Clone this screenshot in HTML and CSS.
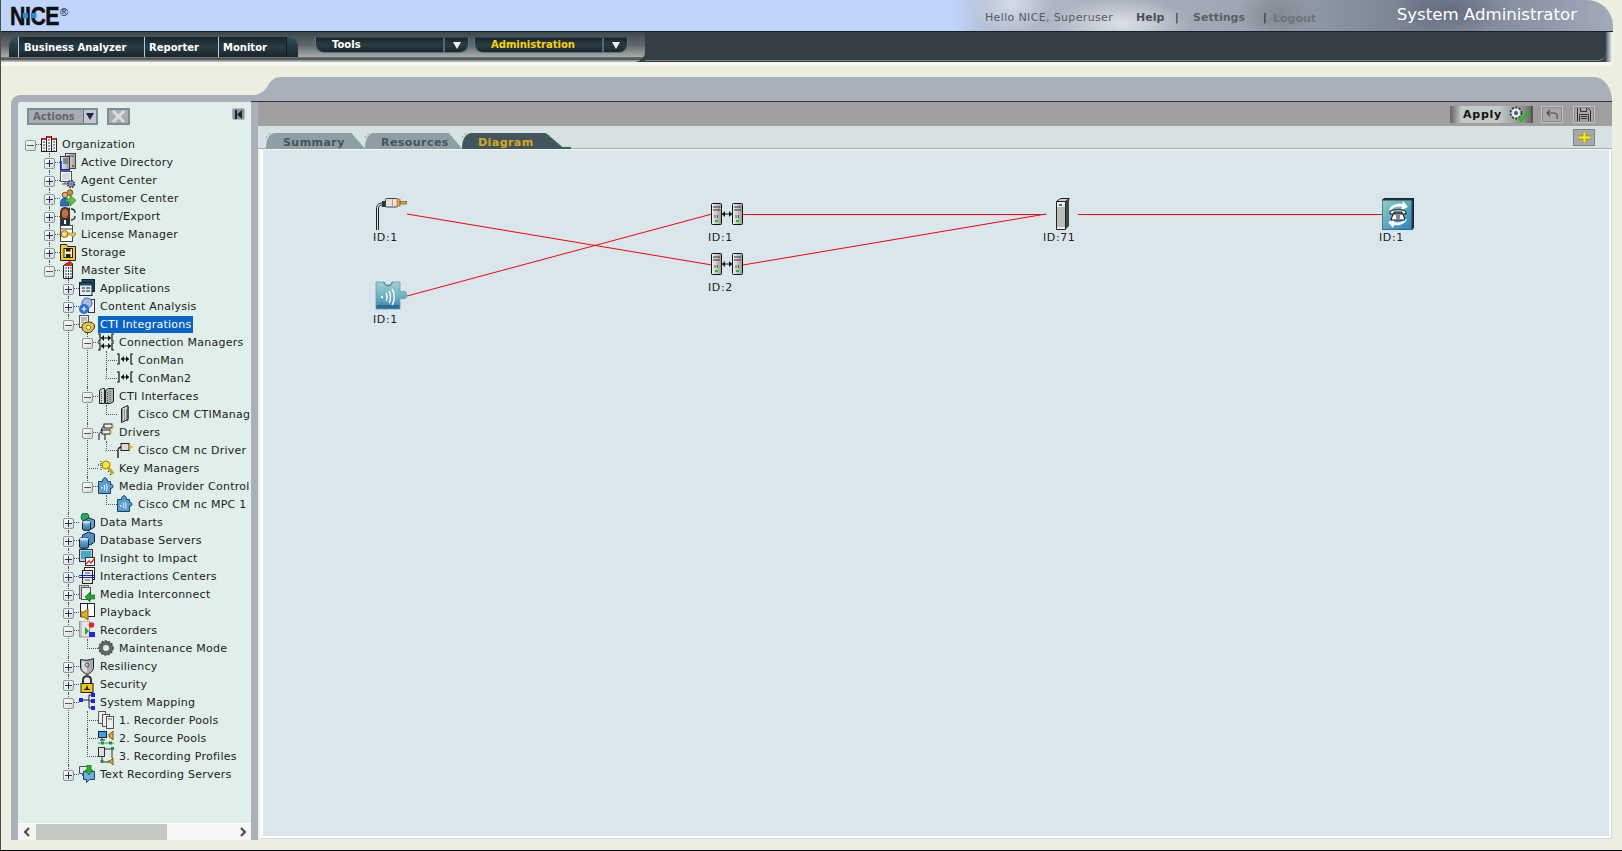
FILE: index.html
```html
<!DOCTYPE html>
<html lang="en">
<head>
<meta charset="utf-8">
<title>System Administrator</title>
<link rel="stylesheet" href="styles.css">
</head>
<body>
<svg class="defs" aria-hidden="true">
  <defs>
    <linearGradient id="metal" x1="0" x2="1" y1="0" y2="0"><stop offset="0" stop-color="#f4f4f4"/><stop offset="1" stop-color="#9a9a9a"/></linearGradient>
    <linearGradient id="blue" x1="0" x2="0" y1="0" y2="1"><stop offset="0" stop-color="#8ec5e8"/><stop offset="1" stop-color="#2f6ca8"/></linearGradient>
    <linearGradient id="puz" x1="0" x2="0" y1="0" y2="1"><stop offset="0" stop-color="#9ed4cc"/><stop offset=".55" stop-color="#6cb0bf"/><stop offset=".85" stop-color="#4a8fb5"/><stop offset=".86" stop-color="#2c6a98"/><stop offset="1" stop-color="#2c6a98"/></linearGradient>
    <linearGradient id="tile" x1="0" x2="1" y1="0" y2="1"><stop offset="0" stop-color="#8fd0c0"/><stop offset="1" stop-color="#2f7fc0"/></linearGradient>
    <symbol id="i-org" viewBox="0 0 16 18"><g stroke="#222" fill="#f4f4f4"><rect x=".5" y="3.500" width="5" height="13"/><rect x="5.500" y="1.500" width="5" height="15"/><rect x="10.500" y="3.500" width="5" height="13"/></g><path fill="#d22" d="M1 3h4v2H1zM6 1h4v2H6zM11 3h4v2h-4z"/><path stroke="#345" stroke-dasharray="2 1" d="M3 6v10M8 4v12M13 6v10"/></symbol>
    <symbol id="i-ad" viewBox="0 0 16 18"><rect x="5.500" y=".5" width="10" height="15" fill="url(#metal)" stroke="#444"/><rect x=".5" y="3.500" width="9" height="13" fill="url(#metal)" stroke="#336"/><path stroke="#12c" stroke-width="1.500" fill="none" d="M1 8v9h9"/><path stroke="#444" d="M3 6h5M3 8h5M3 10h5M7 3h7"/><rect x="12" y="12" width="2" height="2" fill="#c33"/></symbol>
    <symbol id="i-agent" viewBox="0 0 16 18"><rect x=".5" y=".5" width="11" height="10" fill="#fff" stroke="#555"/><rect x="2" y="2" width="8" height="7" fill="#d4dde4"/><path stroke="#555" d="M5 11v2M2 13h6"/><circle cx="11" cy="13" r="3.200" fill="#aab" stroke="#334" stroke-width="2" stroke-dasharray="1.500 1"/><circle cx="11" cy="13" r="1.500" fill="#66e"/></symbol>
    <symbol id="i-customer" viewBox="0 0 16 18"><circle cx="5" cy="6" r="2.800" fill="#e8b070" stroke="#753"/><circle cx="10" cy="3.500" r="2.800" fill="#d09040" stroke="#753"/><path fill="#2a70c8" stroke="#124" stroke-width=".5" d="M0 17c0-6 2-8 5-8s4 2 4 8z"/><path fill="#6ac03a" stroke="#1a6a1a" stroke-width=".6" d="M6 10h4V6l6 5.500-6 5.500v-4H6z"/></symbol>
    <symbol id="i-import" viewBox="0 0 16 18"><path fill="#5a2e1a" d="M0 18V6c0-4 2-6 5-6s5 2 5 6v12z"/><ellipse cx="5" cy="6.500" rx="3.200" ry="4.500" fill="#b87448"/><path fill="#123a4a" d="M0 18c0-4 2-6 5-6s5 2 5 6z"/><path fill="#fff" d="M4 13h2v4H4z"/><path fill="none" stroke="#222" stroke-width="1.300" d="M11 2c3 0 4 2 4 4M15 9c0 3-2 4-4 4"/><path fill="#222" d="M10 0v4l-2-2zM10 11v4l-2-2z"/></symbol>
    <symbol id="i-license" viewBox="0 0 16 18"><rect x=".5" y=".5" width="12" height="16" fill="#fff" stroke="#444"/><path stroke="#444" d="M1 4h11"/><circle cx="4.500" cy="9" r="3.500" fill="#f8cf3a" stroke="#864"/><circle cx="4" cy="9" r="1" fill="#fff"/><path fill="#f8cf3a" stroke="#864" stroke-width=".6" d="M8 8h8v2h-2v2h-2v-2H8z"/></symbol>
    <symbol id="i-storage" viewBox="0 0 16 18"><path fill="#f7cb2e" stroke="#222" d="M.5 17.500V1.500h6l1 2h8v14z"/><rect x="4" y="5.500" width="8.500" height="9" fill="#fff2b0" stroke="#222"/><rect x="6" y="5.500" width="4.500" height="3" fill="#222"/><rect x="6" y="11" width="4.500" height="3.500" fill="#222"/></symbol>
    <symbol id="i-site" viewBox="0 0 16 18"><path fill="#f4f4f4" stroke="#222" d="M3.500 17.500V4.500l6-4 3 2v15z"/><path fill="#d22" d="M4 4l5.500-3.500 2.500 2V5H4z"/><path stroke="#345" stroke-dasharray="2 1" d="M6 6v11M8.500 6v11M11 6v11"/></symbol>
    <symbol id="i-apps" viewBox="0 0 16 18"><rect x="3" y=".5" width="12.500" height="12" fill="#1e4a60" stroke="#123"/><rect x=".5" y="3.500" width="12.500" height="13" fill="#e6eae8" stroke="#123"/><rect x="1" y="4" width="12" height="2.500" fill="#1e4a60"/><path stroke="#567" stroke-width="1.500" d="M3 9h3M7 9h4M3 12h3M7 12h4"/></symbol>
    <symbol id="i-content" viewBox="0 0 16 18"><rect x="9.500" y="2.500" width="6" height="13" fill="#eef" stroke="#333"/><circle cx="8" cy="6" r="5" fill="#a8b8e8" stroke="#468"/><circle cx="5" cy="12" r="5" fill="#2a70d8"/><path stroke="#fff" stroke-width="1.200" d="M2.500 12h5M5 9.500v5"/></symbol>
    <symbol id="i-cti" viewBox="0 0 16 18"><rect x=".5" y=".5" width="9" height="12" fill="#f2f2f2" stroke="#555"/><path stroke="#888" d="M2 3h6M2 5h6M2 7h3"/><path fill="#e8c84a" stroke="#3a2a08" d="M3 12c0-3 3-5 6.500-5S16 9 15.500 12c-1 3-3 5-5 5.500H7c-2-.5-4-3-4-5.500z"/><circle cx="9.500" cy="12.500" r="2.200" fill="#fff3b0" stroke="#3a2a08" stroke-dasharray="1 .6"/></symbol>
    <symbol id="i-conn2" viewBox="0 0 16 18"><path fill="none" stroke="#111" stroke-width="1.200" d="M0 1h2v7H0M0 10h2v7H0M16 1h-2v7h2M16 10h-2v7h2M3 5h10M3 13h10"/><path fill="#111" d="M3 5l3-3v6zM13 5l-3-3v6zM3 13l3-3v6zM13 13l-3-3v6z"/></symbol>
    <symbol id="i-conn" viewBox="0 0 16 18"><path fill="none" stroke="#111" stroke-width="1.200" d="M0 3h2v10H0M16 3h-2v10h2M4 8h8"/><path fill="#111" d="M4 8l3-3v6zM12 8l-3-3v6z"/></symbol>
    <symbol id="i-ctiif" viewBox="0 0 16 18"><path fill="#cfd4cf" stroke="#222" d="M1.500 3.500l3-2h2v15h-5z"/><path fill="#aab3a8" stroke="#222" d="M7.500 3.500l3-2h5v13l-3 2h-5z"/><path stroke="#356" stroke-dasharray="1 1" d="M3.500 5v11M9.500 5v11M12 4v11"/></symbol>
    <symbol id="i-srv" viewBox="0 0 16 18"><path fill="#ddd" stroke="#222" d="M4.500 3.500l6-3v14l-6 3z"/><path stroke="#333" stroke-dasharray="1 1" d="M5 5h5M5 7h5M5 9h5M5 11h5M5 13h5M5 15h5"/><path fill="#555" d="M10 1h2v13l-2 3z"/></symbol>
    <symbol id="i-drivers" viewBox="0 0 16 18"><path fill="none" stroke="#111" d="M1 17v-5c0-2 1-3 3-3M7 17v-5c0-1 0-2 2-3"/><rect x="6" y="1" width="8" height="4" fill="#eee" stroke="#222"/><rect x="13" y="2" width="3" height="2" fill="#e8b020"/><rect x="4" y="7" width="8" height="4" fill="#eee" stroke="#222"/><rect x="11" y="8" width="3" height="2" fill="#e8b020"/><path fill="none" stroke="#111" d="M3 8c1-3 2-5 3-5"/></symbol>
    <symbol id="i-driver" viewBox="0 0 16 18"><path fill="none" stroke="#222" stroke-width="1.400" d="M1 17v-7c0-3 2-4 4-4"/><rect x="4" y="2.500" width="8" height="7" fill="#ddd" stroke="#222"/><rect x="12" y="4" width="2" height="4" fill="#e8a030"/><rect x="13" y="5" width="3" height="2" fill="#e8c020"/></symbol>
    <symbol id="i-keym" viewBox="0 0 16 18"><path stroke="#888" stroke-width="2" stroke-dasharray="1 1" d="M0 6h5M3 2v10"/><circle cx="8" cy="6" r="4" fill="#f8e820" stroke="#a08010"/><path stroke="#c0a010" stroke-width="3" d="M10 8l5 7"/><path stroke="#222" d="M11 12l-1 1M13 15l-1 1"/></symbol>
    <symbol id="i-mpc" viewBox="0 0 16 18"><path fill="#5b9cd0" stroke="#1c4468" d="M.5 4.500h4c0-5 5-5 5 0h3v3c3-1.500 3.500 5 0 3.500v5.500H.5z"/><path fill="none" stroke="#fff" d="M6 8c1 1 1 4 0 5M8 7c1.500 2 1.500 5 0 7"/><rect x="3" y="10" width="1.500" height="1.500" fill="#fff"/></symbol>
    <symbol id="i-marts" viewBox="0 0 16 18"><circle cx="6" cy="4" r="4" fill="#3aa84a" stroke="#1c6a70"/><path fill="#60a8d8" stroke="#123" d="M4.500 8l5-3 6 2v7l-5 3-6-2z"/><path fill="url(#blue)" stroke="#123" d="M3.500 9c0-2 8-2 8 0v7c0 2-8 2-8 0z"/><ellipse cx="7.500" cy="9" rx="4" ry="1.500" fill="#bde"/></symbol>
    <symbol id="i-db" viewBox="0 0 16 18"><path fill="#4d90c8" stroke="#123" d="M3.500 4l6-3 6 2v8l-4 3-8-3z"/><path fill="url(#blue)" stroke="#123" d="M.5 8c0-2 9-2 9 0v8c0 2-9 2-9 0z"/><ellipse cx="5" cy="8" rx="4.500" ry="1.500" fill="#cde"/></symbol>
    <symbol id="i-insight" viewBox="0 0 16 18"><rect x=".5" y=".5" width="13" height="12" fill="#ccc" stroke="#333"/><rect x="2" y="2" width="10" height="8" fill="#4ac"/><rect x="6.500" y="8.500" width="9" height="8" fill="#fff" stroke="#333"/><path fill="none" stroke="#d22" stroke-width="1.300" d="M7 15l3-3 2 2 3-4"/></symbol>
    <symbol id="i-inter" viewBox="0 0 16 18"><rect x="5.500" y=".5" width="10" height="12" fill="#fff" stroke="#222"/><rect x="3.500" y="3.500" width="10" height="13" fill="#e8e8e8" stroke="#222"/><path stroke="#555" d="M6 6h5M6 13h5"/><path fill="none" stroke="#12c" stroke-width="1.200" d="M0 8.500h16M0 10.500h16"/></symbol>
    <symbol id="i-media" viewBox="0 0 16 18"><rect x=".5" y=".5" width="9" height="13" fill="#ccc" stroke="#666"/><rect x="2.500" y="2.500" width="9" height="12" fill="#eee" stroke="#555"/><path fill="#2a2" stroke="#063" stroke-width=".6" d="M6 12l5-5v3h5v4h-5v3z"/></symbol>
    <symbol id="i-playback" viewBox="0 0 16 18"><rect x="1.500" y=".5" width="7" height="13" fill="#fff" stroke="#222"/><rect x="8.500" y=".5" width="7" height="13" fill="#fff" stroke="#222"/><path fill="#e0b020" stroke="#7a5a10" d="M2 9h3l4-3v11l-4-3H2z"/></symbol>
    <symbol id="i-rec" viewBox="0 0 16 18"><rect x=".5" y="0" width="10" height="16" fill="#e8e8e8" stroke="#999"/><path stroke="#999" d="M2 0v16"/><path fill="#2a2" d="M6 6l4 4-4 4z"/><circle cx="12.500" cy="4" r="2.800" fill="#e22"/><rect x="10" y="11" width="6" height="5" fill="#22e"/></symbol>
    <symbol id="i-gear" viewBox="0 0 16 18"><circle cx="8" cy="9" r="5" fill="none" stroke="#666" stroke-width="4"/><circle cx="8" cy="9" r="7" fill="none" stroke="#444" stroke-width="1.500" stroke-dasharray="2 1.500"/></symbol>
    <symbol id="i-shield" viewBox="0 0 16 18"><path fill="#aab" stroke="#222" d="M1.500 2.500c4 1 9 1 13-1v9c0 3-3 6-6.500 7C5 16 1.500 14 1.500 10z"/><path fill="#ddd" d="M3 4c3 1 5 1 5 1v11c-3-1-5-3-5-6z"/><circle cx="8" cy="8" r="2" fill="none" stroke="#555"/></symbol>
    <symbol id="i-lock" viewBox="0 0 16 18"><path fill="none" stroke="#333" stroke-width="2" d="M4 9V5c0-5 8-5 8 0v4"/><rect x="2" y="8.500" width="12" height="9" fill="#f2c80e" stroke="#222"/><path fill="#222" d="M8 10l1.500 4H11v1H5v-1h1.500z"/></symbol>
    <symbol id="i-map" viewBox="0 0 16 18"><path fill="none" stroke="#224" d="M4 7h6M10 2v13M10 2h2M10 8h2M10 15h2"/><g fill="#22e"><rect y="5" width="4" height="4"/><rect x="12" y="0" width="4" height="4"/><rect x="12" y="6" width="4" height="4"/><rect x="12" y="13" width="4" height="4"/></g></symbol>
    <symbol id="i-rp" viewBox="0 0 16 18"><g fill="#eee" stroke="#555"><rect x=".5" y=".5" width="7" height="12"/><rect x="4.500" y="3.500" width="7" height="12"/><rect x="8.500" y="5.500" width="7" height="12"/></g><path stroke="#777" d="M10 8h4"/></symbol>
    <symbol id="i-sp" viewBox="0 0 16 18"><rect x=".5" y="2.500" width="8" height="6" fill="#3aa0e8" stroke="#123"/><path stroke="#123" d="M4 9v2M2 11h5"/><path fill="#e0b020" stroke="#7a5a10" d="M11 5h1l3-3v9l-3-3h-1z"/><path stroke="#1a7" d="M0 14h16"/><rect x="3" y="12.500" width="3" height="3" fill="#2a8a3a"/><rect x="11" y="12.500" width="3" height="3" fill="#2a8a3a"/></symbol>
    <symbol id="i-prof" viewBox="0 0 16 18"><rect x=".5" y=".5" width="6" height="9" fill="#ddd" stroke="#333"/><path stroke="#333" d="M7 2h7M14 2v9M4 10v5M4 15h7"/><rect x="13" y="0" width="3" height="3" fill="#2a8a3a"/><rect x="2.500" y="13" width="3" height="3" fill="#2a8a3a"/><path fill="#e0b020" stroke="#7a5a10" d="M10 14h2l3-3v7l-3-3h-2z"/></symbol>
    <symbol id="i-text" viewBox="0 0 16 18"><path fill="#dfe8f0" stroke="#456" d="M.5 1.500h9v7h-4l-2 2v-2h-3z"/><path fill="#6ab0e8" stroke="#246" d="M4.500 6.500h11v8h-5l-3 3v-3h-3z"/><path fill="#2ab02a" stroke="#060" stroke-width=".6" d="M8 0h4v5h2l-4 5-4-5h2z"/></symbol>
    <g id="tower"><rect x=".5" y=".5" width="10" height="21" rx="1" fill="url(#metal)" stroke="#111"/><path d="M2 4h7M2 7h7" stroke="#333"/><path d="M4 12v3M6.500 12v3" stroke="#555"/><rect x="4" y="17" width="3" height="2" fill="#1c1"/></g>
  </defs>
</svg>

<div class="app">
  <header class="top">
    <div class="logo"><span class="logo-word">NICE<span class="logo-dot one"></span><span class="logo-dot two"></span></span><sup class="reg">®</sup></div>
    <nav class="links">
      <span class="hello">Hello NICE, Superuser</span>
      <a class="link help">Help</a><span class="sep">|</span>
      <a class="link settings">Settings</a><span class="sep sep2">|</span>
      <a class="link logout">Logout</a>
    </nav>
    <div class="role">System Administrator</div>
  </header>

  <div class="nav">
    <div class="nav-left">
      <div class="navtabs">
        <span class="cap cap-l"></span>
        <a class="navtab w-ba">Business Analyzer</a>
        <a class="navtab w-rep">Reporter</a>
        <a class="navtab w-mon">Monitor</a>
        <span class="cap cap-r"></span>
      </div>
      <div class="combo combo-tools"><span class="combo-text">Tools</span><span class="combo-btn"><i class="tri"></i></span></div>
      <div class="combo"><span class="combo-text admin">Administration</span><span class="combo-btn"><i class="tri"></i></span></div>
    </div>
    <div class="nav-right"></div>
  </div>
  <div class="nav-shine"></div>

  <div class="work">
    <aside class="side">
      <div class="side-tools">
        <div class="actions"><span class="actions-label">Actions</span><span class="actions-btn"><i class="tri tri-navy"></i></span></div>
        <button class="x-btn" aria-label="Delete"><svg width="15" height="13" viewBox="0 0 15 13"><path d="M2 1l11 11M13 1L2 12" stroke="#dcdcdc" stroke-width="3"/></svg></button>
        <span class="collapse"><svg width="7" height="9" viewBox="0 0 7 9"><path fill="#223" d="M0 0h2v9H0zM7 0v9L2 4.500z"/></svg></span>
      </div>
      <div class="tree-wrap">
        <ul class="tree root">
          <li>
            <div class="row"><span class="tog minus"></span><svg class="ico"><use href="#i-org"/></svg><span class="lbl">Organization</span></div>
            <ul class="tree">
              <li><div class="row"><span class="tog plus"></span><svg class="ico"><use href="#i-ad"/></svg><span class="lbl">Active Directory</span></div></li>
              <li><div class="row"><span class="tog plus"></span><svg class="ico"><use href="#i-agent"/></svg><span class="lbl">Agent Center</span></div></li>
              <li><div class="row"><span class="tog plus"></span><svg class="ico"><use href="#i-customer"/></svg><span class="lbl">Customer Center</span></div></li>
              <li><div class="row"><span class="tog plus"></span><svg class="ico"><use href="#i-import"/></svg><span class="lbl">Import/Export</span></div></li>
              <li><div class="row"><span class="tog plus"></span><svg class="ico"><use href="#i-license"/></svg><span class="lbl">License Manager</span></div></li>
              <li><div class="row"><span class="tog plus"></span><svg class="ico"><use href="#i-storage"/></svg><span class="lbl">Storage</span></div></li>
              <li>
                <div class="row"><span class="tog minus"></span><svg class="ico"><use href="#i-site"/></svg><span class="lbl">Master Site</span></div>
                <ul class="tree">
                  <li><div class="row"><span class="tog plus"></span><svg class="ico"><use href="#i-apps"/></svg><span class="lbl">Applications</span></div></li>
                  <li><div class="row"><span class="tog plus"></span><svg class="ico"><use href="#i-content"/></svg><span class="lbl">Content Analysis</span></div></li>
                  <li>
                    <div class="row"><span class="tog minus"></span><svg class="ico"><use href="#i-cti"/></svg><span class="lbl selected">CTI Integrations</span></div>
                    <ul class="tree">
                      <li>
                        <div class="row"><span class="tog minus"></span><svg class="ico"><use href="#i-conn2"/></svg><span class="lbl">Connection Managers</span></div>
                        <ul class="tree">
                          <li><div class="row"><span class="tog none"></span><svg class="ico"><use href="#i-conn"/></svg><span class="lbl">ConMan</span></div></li>
                          <li><div class="row"><span class="tog none"></span><svg class="ico"><use href="#i-conn"/></svg><span class="lbl">ConMan2</span></div></li>
                        </ul>
                      </li>
                      <li>
                        <div class="row"><span class="tog minus"></span><svg class="ico"><use href="#i-ctiif"/></svg><span class="lbl">CTI Interfaces</span></div>
                        <ul class="tree">
                          <li><div class="row"><span class="tog none"></span><svg class="ico"><use href="#i-srv"/></svg><span class="lbl">Cisco CM CTIManag</span></div></li>
                        </ul>
                      </li>
                      <li>
                        <div class="row"><span class="tog minus"></span><svg class="ico"><use href="#i-drivers"/></svg><span class="lbl">Drivers</span></div>
                        <ul class="tree">
                          <li><div class="row"><span class="tog none"></span><svg class="ico"><use href="#i-driver"/></svg><span class="lbl">Cisco CM nc Driver</span></div></li>
                        </ul>
                      </li>
                      <li><div class="row"><span class="tog none"></span><svg class="ico"><use href="#i-keym"/></svg><span class="lbl">Key Managers</span></div></li>
                      <li>
                        <div class="row"><span class="tog minus"></span><svg class="ico"><use href="#i-mpc"/></svg><span class="lbl">Media Provider Control</span></div>
                        <ul class="tree">
                          <li><div class="row"><span class="tog none"></span><svg class="ico"><use href="#i-mpc"/></svg><span class="lbl">Cisco CM nc MPC 1</span></div></li>
                        </ul>
                      </li>
                    </ul>
                  </li>
                  <li><div class="row"><span class="tog plus"></span><svg class="ico"><use href="#i-marts"/></svg><span class="lbl">Data Marts</span></div></li>
                  <li><div class="row"><span class="tog plus"></span><svg class="ico"><use href="#i-db"/></svg><span class="lbl">Database Servers</span></div></li>
                  <li><div class="row"><span class="tog plus"></span><svg class="ico"><use href="#i-insight"/></svg><span class="lbl">Insight to Impact</span></div></li>
                  <li><div class="row"><span class="tog plus"></span><svg class="ico"><use href="#i-inter"/></svg><span class="lbl">Interactions Centers</span></div></li>
                  <li><div class="row"><span class="tog plus"></span><svg class="ico"><use href="#i-media"/></svg><span class="lbl">Media Interconnect</span></div></li>
                  <li><div class="row"><span class="tog plus"></span><svg class="ico"><use href="#i-playback"/></svg><span class="lbl">Playback</span></div></li>
                  <li>
                    <div class="row"><span class="tog minus"></span><svg class="ico"><use href="#i-rec"/></svg><span class="lbl">Recorders</span></div>
                    <ul class="tree">
                      <li><div class="row"><span class="tog none"></span><svg class="ico"><use href="#i-gear"/></svg><span class="lbl">Maintenance Mode</span></div></li>
                    </ul>
                  </li>
                  <li><div class="row"><span class="tog plus"></span><svg class="ico"><use href="#i-shield"/></svg><span class="lbl">Resiliency</span></div></li>
                  <li><div class="row"><span class="tog plus"></span><svg class="ico"><use href="#i-lock"/></svg><span class="lbl">Security</span></div></li>
                  <li>
                    <div class="row"><span class="tog minus"></span><svg class="ico"><use href="#i-map"/></svg><span class="lbl">System Mapping</span></div>
                    <ul class="tree">
                      <li><div class="row"><span class="tog none"></span><svg class="ico"><use href="#i-rp"/></svg><span class="lbl">1. Recorder Pools</span></div></li>
                      <li><div class="row"><span class="tog none"></span><svg class="ico"><use href="#i-sp"/></svg><span class="lbl">2. Source Pools</span></div></li>
                      <li><div class="row"><span class="tog none"></span><svg class="ico"><use href="#i-prof"/></svg><span class="lbl">3. Recording Profiles</span></div></li>
                    </ul>
                  </li>
                  <li><div class="row"><span class="tog plus"></span><svg class="ico"><use href="#i-text"/></svg><span class="lbl">Text Recording Servers</span></div></li>
                </ul>
              </li>
            </ul>
          </li>
        </ul>
      </div>
      <div class="hscroll">
        <span class="sb-arrow"><svg width="8" height="10" viewBox="0 0 8 10"><path d="M6 1L2 5l4 4" fill="none" stroke="#444" stroke-width="2"/></svg></span>
        <span class="sb-thumb"></span>
        <span class="sb-rest"></span>
        <span class="sb-arrow"><svg width="8" height="10" viewBox="0 0 8 10"><path d="M2 1l4 4-4 4" fill="none" stroke="#444" stroke-width="2"/></svg></span>
      </div>
    </aside>

    <main class="main">
      <div class="band">
        <svg class="band-curve" width="30" height="24" viewBox="0 0 30 24"><path fill="#a9b0bb" d="M0 24V18C8 18 12 16 16 10 20 3 24 0 30 0V24Z"/></svg>
        <div class="band-fill"></div>
      </div>
      <div class="main-body">
        <div class="toolbar">
          <button class="apply">Apply<svg class="apply-ico" width="24" height="17" viewBox="0 0 24 17"><circle cx="10" cy="7" r="5.500" fill="#dfe6ee" stroke="#333" stroke-width="1.800" stroke-dasharray="2.200 1.300"/><circle cx="10" cy="7" r="2" fill="#556"/><path d="M12 11l3 4 7-10" fill="none" stroke="#18c018" stroke-width="2.200"/></svg></button>
          <button class="tool-btn"><svg width="13" height="11" viewBox="0 0 13 11"><path d="M4 1L1 4l3 3M1 4h7c3 0 4 2 3 6" fill="none" stroke="#444" stroke-width="1.100"/></svg></button>
          <button class="tool-btn save"><svg width="14" height="15" viewBox="0 0 14 15"><path d="M.5.5h10l3 3v11H.5z" fill="none" stroke="#333"/><path d="M3.500.5v4h6v-4M2.500 14.500v-7h9v7M4 9.500h6M4 11.500h6" fill="none" stroke="#333"/></svg></button>
        </div>
        <div class="tabs-row">
          <div class="tabs">
            <a class="tab t-sum"><svg class="tab-shape" viewBox="0 0 100 16" preserveAspectRatio="none"><path class="tab-fill" d="M0 16Q0 2 8 0H86L100 16Z"/><path class="tab-edge" d="M86 0L100 16M0 5Q2 0 6 0"/></svg><span class="tab-text">Summary</span></a>
            <a class="tab t-res"><svg class="tab-shape" viewBox="0 0 100 16" preserveAspectRatio="none"><path class="tab-fill" d="M0 16Q0 2 8 0H86L100 16Z"/><path class="tab-edge" d="M86 0L100 16M0 5Q2 0 6 0"/></svg><span class="tab-text">Resources</span></a>
            <a class="tab t-dia active"><svg class="tab-shape" viewBox="0 0 100 16" preserveAspectRatio="none"><path class="tab-fill" d="M0 16Q0 2 8 0H77L92 14H100V16Z"/><path class="tab-edge" d="M77 0L92 14H100M0 5Q2 0 6 0"/></svg><span class="tab-text">Diagram</span></a>
          </div>
          <button class="plus-btn"><svg width="13" height="11" viewBox="0 0 13 11"><path fill="#f8e820" stroke="#8a7a10" stroke-width=".6" d="M5 0h3v4h5v3H8v4H5V7H0V4h5z"/></svg></button>
        </div>
        <div class="canvas">
          <svg class="wires" width="1345" height="686" viewBox="0 0 1345 686">
            <path d="M144 64L449 115M144 146L449 64M480 115L783 64" fill="none" stroke="#f00" stroke-width="1"/>
            <path class="wire-straight" d="M480 64.500H783M815 64.500H1119"/>
          </svg>
          <div class="node n-jack">
            <svg class="gfx g-jack" width="32" height="33" viewBox="0 0 32 33"><path d="M1.500 33V12c0-4 2-6 6-6h3" fill="none" stroke="#222"/><path d="M3.500 33V12c0-3 1-4 4-4h3" fill="none" stroke="#222"/><rect x="7" y="4" width="4" height="6" fill="#333"/><rect x="10.500" y="1.500" width="12" height="8.500" rx="1" fill="#e4e4e4" stroke="#444"/><rect x="17" y="2" width="1" height="8" fill="#d88"/><rect x="22" y="2" width="3" height="7" fill="#f0a040" stroke="#a04010" stroke-width=".5"/><rect x="25" y="4.500" width="7" height="2.500" fill="#e8a020" stroke="#333" stroke-width=".5"/></svg>
            <span class="nlabel">ID:1</span>
          </div>
          <div class="node n-mpc">
            <svg class="gfx g-mpc" width="32" height="29" viewBox="0 0 32 29"><path fill="url(#puz)" stroke="#6a9aa8" stroke-width=".8" d="M1 1h8c0 4 8 4 8 0h8v10c2-1 7-2 7 3s-5 4-7 3v11H1z"/><path d="M9 1c0 5 9 5 8 0" fill="none" stroke="#5568a8"/><rect x="6" y="15" width="2" height="2" fill="#fff"/><path d="M11 12c1.500 2 1.500 6 0 8M14 10c2 3 2 9 0 12M17 8c3 4 3 12 0 16" fill="none" stroke="#fff" stroke-width="1.400"/></svg>
            <span class="nlabel">ID:1</span>
          </div>
          <div class="node n-p1">
            <svg class="gfx g-pair" width="32" height="22" viewBox="0 0 32 22"><use href="#tower"/><use href="#tower" x="21"/><path d="M11 11h10" stroke="#111"/><path fill="#111" d="M11 11l3-3v6zM21 11l-3-3v6z"/></svg>
            <span class="nlabel">ID:1</span>
          </div>
          <div class="node n-p2">
            <svg class="gfx g-pair" width="32" height="22" viewBox="0 0 32 22"><use href="#tower"/><use href="#tower" x="21"/><path d="M11 11h10" stroke="#111"/><path fill="#111" d="M11 11l3-3v6zM21 11l-3-3v6z"/></svg>
            <span class="nlabel">ID:2</span>
          </div>
          <div class="node n-srv">
            <svg class="gfx g-srv" width="14" height="32" viewBox="0 0 14 32"><path fill="#444" d="M9 3l4-3v28l-4 4z"/><path fill="#eee" stroke="#222" d="M.5 3.500h9v28h-9z"/><path fill="#ccc" stroke="#222" d="M.5 3.500l4-3h9l-4 3z"/><rect x="3" y="6" width="3" height="2" fill="#1a8a6a"/><path d="M1 10h8M1 12h8M1 14h8M1 16h8M1 18h8M1 20h8M1 22h8M1 24h8M1 26h8M1 28h8" stroke="#888"/></svg>
            <span class="nlabel">ID:71</span>
          </div>
          <div class="node n-phone">
            <svg class="gfx g-phone" width="32" height="32" viewBox="0 0 32 32"><path fill="#223" d="M0 2l2-2h30v30l-2 2z"/><rect x="0" y="2" width="30" height="30" fill="url(#tile)" stroke="#1a4a50"/><path d="M7 12c2-5 7-7 13-6l1-3 5 6-7 3 1-3c-5-1-9 0-11 3z" fill="#fff"/><path d="M25 21c-2 5-7 7-13 6l-1 3-5-6 7-3-1 3c5 1 9 0 11-3z" fill="#fff"/><path d="M8 14c0-3 16-3 16 0v2h-4v-2h-8v2H8z" fill="#f4f4f4" stroke="#111"/><path d="M11 16h10l2 6H9z" fill="#fff" stroke="#111"/><path d="M14 18h4M14 20h4" stroke="#111"/></svg>
            <span class="nlabel">ID:1</span>
          </div>
        </div>
      </div>
    </main>
  </div>
</div>
</body>
</html>
```

FILE: styles.css
```css
* { box-sizing: border-box; }
html, body { margin: 0; padding: 0; height: 100%; overflow: hidden; }
body { background: #eceedf; font-family: "DejaVu Sans", Verdana, sans-serif; font-size: 11px; color: #222; }
.defs { position: absolute; width: 0; height: 0; overflow: hidden; }
button { padding: 0; margin: 0; font: inherit; cursor: default; }
a { cursor: default; }

.app { height: 851px; width: 1622px; display: flex; flex-direction: column; border-left: 1px solid #4a4a4a; border-bottom: 1px solid #000; }
.app > * { flex: none; }

/* header */
.top {
  height: 31px; margin-right: 9px; display: flex; align-items: flex-start;
  border-top-right-radius: 26px;
  background:
    radial-gradient(ellipse 70px 26px at 1120px 24px, rgba(230,233,238,.85), rgba(230,233,238,0) 100%),
    radial-gradient(ellipse 40px 30px at 1010px 4px, rgba(225,232,245,.7), rgba(225,232,245,0) 100%),
    radial-gradient(ellipse 60px 24px at 1450px 10px, rgba(70,80,100,.45), rgba(70,80,100,0) 100%),
    radial-gradient(ellipse 40px 30px at 1275px 15px, rgba(110,115,120,.5), rgba(110,115,120,0) 100%),
    linear-gradient(90deg, #bfd3fb 0, #bfd3fb 950px, #b4bed0 990px, #aab0bd 1100px, #9da5b3 1250px, #76808f 1420px, #8e97a8 1540px, #a3abba 1611px);
}
.logo { position: relative; margin: 3px 0 0 9px; width: 71px; color: #0d0d14; }
.logo-word { position: relative; display: block; width: 60px; font: 900 25px/26px "Liberation Sans", Arial, sans-serif; letter-spacing: -.5px; -webkit-text-stroke: .5px #0d0d14; transform: scaleX(.85); transform-origin: 0 0; white-space: nowrap; }
.logo-dot { position: absolute; top: 10px; width: 6px; height: 5px; background: #1f8fdc; }
.logo-dot.one { left: 15px; }
.logo-dot.two { left: 25px; }
.reg { position: absolute; left: 50px; top: 3px; font: 400 11px/12px "Liberation Sans", Arial, sans-serif; }
.links { margin: 10px 0 0 904px; display: flex; align-items: center; height: 14px; white-space: nowrap; color: #555b63; }
.hello { width: 151px; letter-spacing: .35px; }
.link { font-weight: 700; color: #4c5158; }
.help { width: 39px; }
.sep { width: 18px; color: #222; }
.settings { width: 70px; color: #5a5f66; }
.sep2 { width: 10px; }
.logout { color: #6f7479; margin-top: 2px; }
.role { margin: 5px 0 0 auto; padding-right: 36px; font-size: 16.600px; line-height: 20px; color: #fff; white-space: nowrap; }

/* nav */
.nav { height: 31px; margin-right: 9px; display: flex; border-top: 1px solid #14202a; background: linear-gradient(90deg, #343e44 0, #343e44 1604px, #6d7a7d 1606px, #f0f4f2 1611px); }
.nav-left {
  width: 644px; height: 30px; padding: 5px 0 0 8px; display: flex; align-items: flex-start;
  border-bottom-right-radius: 10px;
  background: linear-gradient(180deg, #3f4649 0, #63696b 45%, #a8aaa8 82%, #555a5c 86%, #555a5c 92%, #8c9290 94%, #c4c8c6 100%);
}
.navtabs { display: flex; height: 20px; margin-right: 17px; }
.navtab {
  display: flex; align-items: center; padding-left: 5px; height: 20px;
  border-left: 1px solid #b7cad0; color: #fff; font-weight: 700; font-size: 10px;
  background: linear-gradient(180deg, #16252b, #2a3c42 50%, #16252b);
  white-space: nowrap;
}
.cap { display: block; width: 9px; background: linear-gradient(180deg, #2c5666, #2a3c42 40%, #1d2a30); }
.cap-l { border-top-left-radius: 9px; }
.cap-r { width: 12px; border-top-right-radius: 9px; border-left: 1px solid #0f1a1e; }
.w-ba { width: 126px; }
.w-rep { width: 74px; padding-left: 4px; }
.w-mon { width: 68px; padding-left: 4px; }
.combo { width: 154px; height: 16px; display: flex; margin-right: 5px; border: 1px solid #4f7a8c; border-top-color: #2a4450; border-radius: 1px 1px 9px 9px; background: linear-gradient(180deg, #18262c, #2a3c42 50%, #18262c); color: #fff; font-weight: 700; font-size: 10px; overflow: hidden; }
.combo-text { width: 129px; padding-left: 16px; line-height: 13px; border-right: 2px solid #55696f; white-space: nowrap; }
.admin { color: #f7d200; }
.combo-btn { flex: 1; display: flex; align-items: center; justify-content: center; }
.tri { display: block; width: 0; height: 0; border-left: 4.500px solid transparent; border-right: 4.500px solid transparent; border-top: 7px solid #f2f2f2; }
.tri-navy { border-top-color: #1c2458; }
.nav-right { flex: 1; height: 29px; border-bottom: 1px solid #7d8a8a; border-bottom-right-radius: 8px; margin-right: 7px; background: #343e44; }
.nav-shine { height: 4px; margin-right: 9px; background: #f5f5f1; }

/* work area */
.work { height: 773px; margin-top: 11px; display: flex; align-items: flex-start; padding-left: 10px; }
.side { width: 240px; height: 745px; margin-top: 18px; display: flex; flex-direction: column; background: #e0efe9; border-left: 7px solid #a9b0bb; border-top: 7px solid #a9b0bb; border-top-left-radius: 9px; overflow: hidden; }
.side-tools { height: 33px; flex: none; padding: 6px 6px 0 9px; display: flex; align-items: flex-start; }
.actions { width: 71px; height: 17px; display: flex; border: 2px solid #7f8c92; background: #a9adb3; }
.actions-label { width: 55px; padding-left: 4px; line-height: 13px; font-size: 10px; font-weight: 700; color: #62666b; border-right: 1px solid #6a7278; }
.actions-btn { flex: 1; display: flex; align-items: center; justify-content: center; background: #c4c8cc; }
.x-btn { width: 23px; height: 17px; margin-left: 9px; display: flex; align-items: center; justify-content: center; border: 2px solid #7f8c92; background: #a9adb3; }
.collapse { margin-left: auto; width: 13px; height: 12px; display: flex; align-items: center; justify-content: center; background: #8e9aa0; border: 1px solid #aeb6ba; border-radius: 2px; }

/* tree */
.tree-wrap { flex: 1; min-height: 0; overflow: hidden; }
.tree { list-style: none; margin: 0; padding: 0 0 0 19px; }
.tree.root { padding-left: 7px; }
.tree li { position: relative; }
.tree .tree > li::before { content: ""; position: absolute; left: 5px; top: 0; bottom: 0; border-left: 1px dotted #555; }
.tree .tree > li:last-child::before { bottom: auto; height: 10px; }
.row { position: relative; height: 18px; display: flex; align-items: center; white-space: nowrap; }
.row::before { content: ""; position: absolute; left: 5px; top: 9px; width: 11px; border-top: 1px dotted #555; }
.tog { position: relative; flex: none; width: 11px; height: 11px; margin-right: 5px; margin-top: 2px; }
.plus, .minus { border: 1px solid #8f969a; border-radius: 2px; background: linear-gradient(135deg, #fff, #d4d8da); }
.plus::before, .minus::before { content: ""; position: absolute; left: 1px; top: 4px; width: 7px; height: 1px; background: #26306a; }
.minus::before { background: #555; }
.plus::after { content: ""; position: absolute; left: 4px; top: 1px; width: 1px; height: 7px; background: #26306a; }
.ico { position: relative; flex: none; width: 16px; height: 18px; }
.lbl { margin-left: 3px; padding: 0 2px; line-height: 17px; color: #222; letter-spacing: .25px; }
.selected { background: #0a64c8; color: #fff; }

/* sidebar scrollbar */
.hscroll { flex: none; height: 17px; display: flex; align-items: stretch; background: #f5f6f4; border-top: 1px solid #fff; }
.sb-arrow { width: 17px; display: flex; align-items: center; justify-content: center; }
.sb-arrow:first-child { width: 18px; }
.sb-thumb { width: 131px; background: #c3c8c2; }
.sb-rest { flex: 1; }

/* main */
.main { width: 1361px; height: 763px; display: flex; flex-direction: column; }
.band { height: 25px; flex: none; display: flex; border-bottom: 1px solid #303438; position: relative; }
.band-curve { flex: none; display: block; }
.band-fill { flex: 1; background: #a9b0bb; border-top-right-radius: 18px 24px; }
.main-body { flex: 1; min-height: 0; display: flex; flex-direction: column; border-left: 7px solid #a9b0bb; background: #eef1ea; }
.toolbar { flex: none; height: 24px; background: #a0a0a0; display: flex; align-items: flex-start; justify-content: flex-end; padding: 4px 17px 0 0; }
.apply { width: 83px; height: 17px; display: flex; align-items: center; justify-content: space-between; padding: 0 1px 0 13px; font-weight: 700; font-size: 11px; letter-spacing: .75px; color: #111; border: 0; border-right: 2px solid #555; background: linear-gradient(90deg, #666 0, #8c8c8c 6%, #c4c8c6 14%, #c4c8c6 60%, #8f9090 90%, #6a6a6a 100%); }
.tool-btn { width: 22px; height: 17px; margin-left: 8px; display: flex; align-items: center; justify-content: center; background: #a8a8a8; border: 1px solid #c4c4c4; outline: 1px solid #8a8a8a; outline-offset: -2px; }
.save { margin-left: 10px; }
.tabs-row { flex: none; height: 24px; display: flex; justify-content: space-between; align-items: flex-end; padding: 0 17px 0 8px; background: #d7e1e3; border-bottom: 1px solid #f8f8f8; box-shadow: inset 0 -1px 0 #a9a9a9; }
.tabs { display: flex; height: 16px; }
.tab { position: relative; display: flex; align-items: center; height: 16px; padding-top: 2px; font-weight: 700; font-size: 11px; letter-spacing: .45px; color: #46545c; }
.tab-shape { position: absolute; left: 0; top: 0; width: 100%; height: 100%; display: block; }
.tab-fill { fill: #8f9ea4; }
.tab-edge { fill: none; stroke: #2fe02f; stroke-width: 1; stroke-dasharray: 2 2; vector-effect: non-scaling-stroke; }
.tab-text { position: relative; }
.active .tab-fill { fill: #43555f; }
.active { color: #d9a81a; }
.t-sum { width: 99px; padding-left: 17px; }
.t-res { width: 97px; padding-left: 16px; }
.t-dia { width: 109px; padding-left: 16px; }
.plus-btn { align-self: flex-start; margin-top: 3px; width: 22px; height: 17px; display: flex; align-items: center; justify-content: center; background: #a4aaac; border: 1px solid #7b8488; }

/* diagram canvas */
.canvas { position: relative; flex: none; height: 688px; margin: 0 1px 0 2px; background: #d9e7ed; border-left: 3px solid #fff; border-right: 2px solid #fff; border-bottom: 2px solid #fff; box-shadow: 1px 1px 0 #d6d8dc; overflow: hidden; }
.wires { position: absolute; left: 0; top: 0; }
.wire-straight { fill: none; stroke: #f00; stroke-width: 1; shape-rendering: crispEdges; }
.node { position: absolute; display: flex; flex-direction: column; align-items: flex-start; }
.gfx { display: block; flex: none; }
.nlabel { display: block; height: 14px; margin-top: 1px; line-height: 14px; font-size: 11px; letter-spacing: .6px; color: #222; }
.n-jack { left: 110px; top: 47px; }
.g-jack { margin-left: 2px; }
.n-mpc { left: 110px; top: 131px; }
.g-mpc { margin: 0 0 2px 2px; }
.n-p1 { left: 445px; top: 53px; }
.n-p2 { left: 445px; top: 103px; }
.g-pair { margin: 0 0 5px 3px; }
.n-srv { left: 780px; top: 48px; }
.g-srv { margin-left: 13px; }
.n-phone { left: 1116px; top: 48px; }
.g-phone { margin-left: 3px; }
```
